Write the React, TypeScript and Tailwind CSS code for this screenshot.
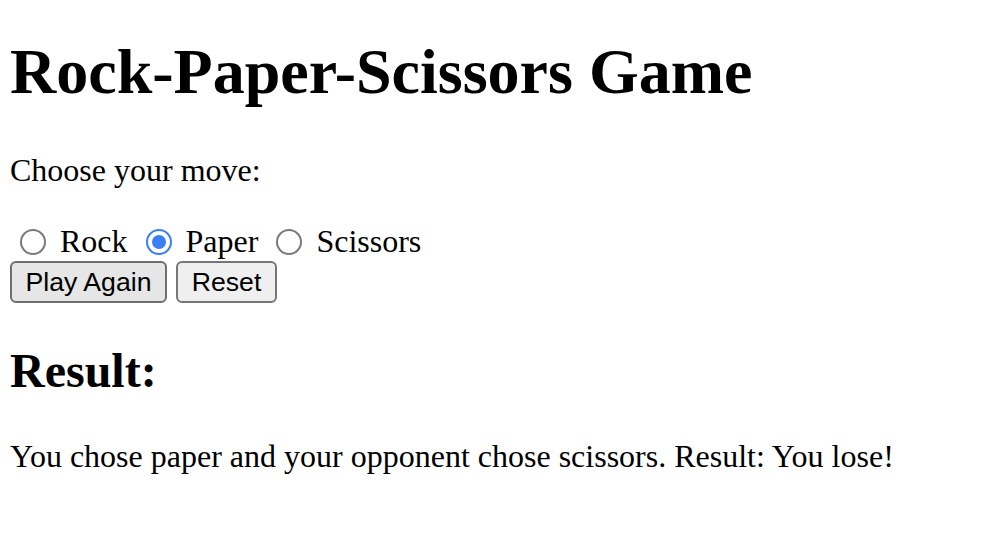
import React, { useState } from "react";

type Move = "rock" | "paper" | "scissors";

const moves: { value: Move; label: string }[] = [
  { value: "rock", label: "Rock" },
  { value: "paper", label: "Paper" },
  { value: "scissors", label: "Scissors" },
];

const Radio = ({ checked, onClick }: { checked: boolean; onClick: () => void }) => (
  <span
    onClick={onClick}
    className={
      checked
        ? "inline-flex items-center justify-center align-baseline w-[26px] h-[26px] ml-[10px] mr-[6px] -translate-y-[3px] rounded-full border-[2px] border-[#3b7ef6] bg-white cursor-pointer"
        : "inline-flex items-center justify-center align-baseline w-[26px] h-[26px] ml-[10px] mr-[6px] -translate-y-[3px] rounded-full border-[2px] border-[#7a7a7a] bg-white cursor-pointer"
    }
  >
    <span className={checked ? "block w-[14px] h-[14px] rounded-full bg-[#3b7ef6]" : "block w-[14px] h-[14px] rounded-full bg-transparent"} />
  </span>
);

export default function App() {
  const [move, setMove] = useState<Move>("paper");

  return (
    <div className="min-h-screen bg-white text-black pt-[35px] px-[10px] font-['Liberation_Serif','Times_New_Roman',serif]">
      {/* Title */}
      <h1 className="text-[64px] leading-[74px] font-bold mb-[43px]">Rock-Paper-Scissors Game</h1>

      <p className="text-[32px] leading-[37px] mb-[34px]">Choose your move:</p>

      {/* Move picker */}
      <div className="text-[32px] leading-[37px]">
        {moves.map((m) => (
          <React.Fragment key={m.value}>
            <Radio checked={move === m.value} onClick={() => setMove(m.value)} />
            <label className="cursor-pointer" onClick={() => setMove(m.value)}>
              {" "}
              {m.label}
            </label>{" "}
          </React.Fragment>
        ))}
      </div>

      {/* Buttons */}
      <div className="flex gap-[9px] mt-[1px] font-['Liberation_Sans',Arial,sans-serif] text-[26.67px]">
        <button className="w-[157px] h-[42px] flex items-center justify-center rounded-[6px] border-[2px] border-[#6e6e6e] bg-[#e6e6e6]">
          Play Again
        </button>
        <button
          onClick={() => setMove("paper")}
          className="w-[101px] h-[42px] flex items-center justify-center rounded-[6px] border-[2px] border-[#767676] bg-[#efefef]"
        >
          Reset
        </button>
      </div>

      {/* Result */}
      <h2 className="text-[48px] leading-[55px] font-bold mt-[40px] mb-[40px]">Result:</h2>
      <p className="text-[32px] leading-[37px]">
        You chose paper and your opponent chose scissors. Result: You lose!
      </p>
    </div>
  );
}
